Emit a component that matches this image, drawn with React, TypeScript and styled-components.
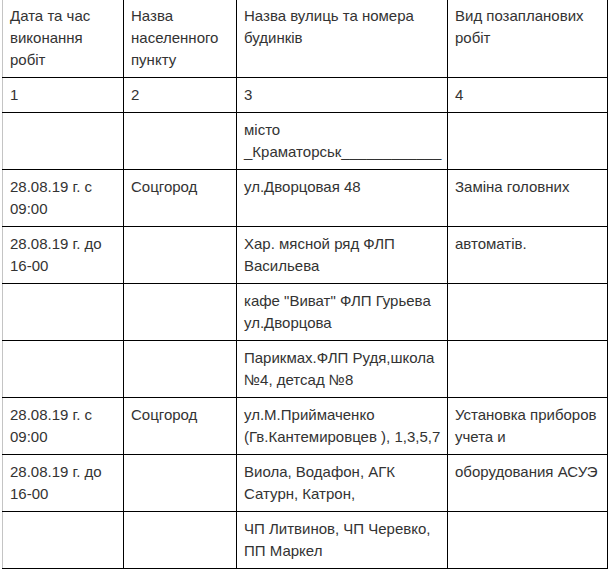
import React from 'react'
import styled, { createGlobalStyle } from 'styled-components'

const GlobalStyle = createGlobalStyle`
  html, body {
    margin: 0;
    padding: 0;
    background: #fff;
  }
  body {
    font-family: "Liberation Sans", Arial, sans-serif;
    font-size: 15px;
    color: #333;
  }
`

const Page = styled.div`
  width: 608px;
  height: 569px;
  overflow: hidden;
`

const Table = styled.table`
  margin: -2px 0 0 2px;
  width: 605px;
  border-collapse: collapse;
  table-layout: fixed;
`

const Cell = styled.td`
  border: 1px solid #000;
  padding: 6px 6px 6px 7px;
  line-height: 22px;
  vertical-align: top;

  &:first-child {
    border-left-color: #c4c4c4;
  }
`

const widths = [121, 113, 211, 160]

type Row = [string, string, string, string]

const rows: Row[] = [
  ['Дата та час виконання робіт', 'Назва населенного пункту', 'Назва вулиць та номера будинків', 'Вид позапланових робіт'],
  ['1', '2', '3', '4'],
  ['', '', 'місто _Краматорськ____________', ''],
  ['28.08.19 г. с 09:00', 'Соцгород', 'ул.Дворцовая 48', 'Заміна головних'],
  ['28.08.19 г. до 16-00', '', 'Хар. мясной ряд ФЛП Васильева', 'автоматів.'],
  ['', '', 'кафе "Виват" ФЛП Гурьева ул.Дворцова', ''],
  ['', '', 'Парикмах.ФЛП Рудя,школа №4, детсад №8', ''],
  ['28.08.19 г. с 09:00', 'Соцгород', 'ул.М.Приймаченко (Гв.Кантемировцев ), 1,3,5,7', 'Установка приборов учета и'],
  ['28.08.19 г. до 16-00', '', 'Виола, Водафон, АГК Сатурн, Катрон,', 'оборудования АСУЭ'],
  ['', '', 'ЧП Литвинов, ЧП Черевко, ПП Маркел', ''],
]

export default function App() {
  return (
    <Page>
      <GlobalStyle />
      <Table>
        <colgroup>
          {widths.map((w, i) => (
            <col key={i} style={{ width: w }} />
          ))}
        </colgroup>
        <tbody>
          {rows.map((row, i) => (
            <tr key={i}>
              {row.map((text, j) => (
                <Cell key={j}>{text}</Cell>
              ))}
            </tr>
          ))}
        </tbody>
      </Table>
    </Page>
  )
}
